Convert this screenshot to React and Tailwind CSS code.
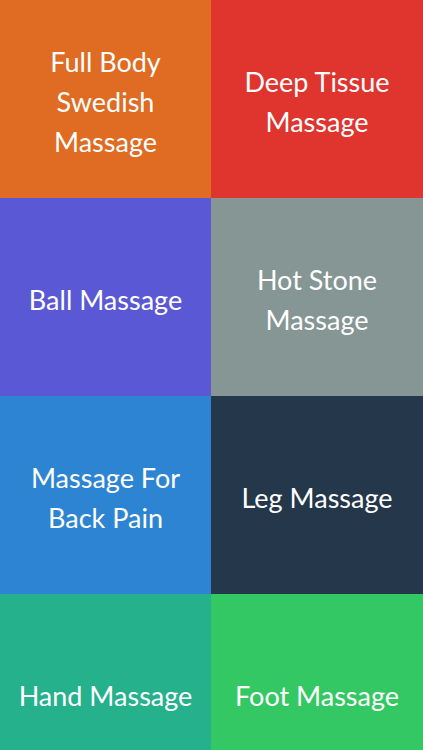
import React from "react";

const tiles = [
  { lines: ["Full Body", "Swedish", "Massage"], bg: "bg-[#e06b22]" },
  { lines: ["Deep Tissue", "Massage"], bg: "bg-[#e0342f]" },
  { lines: ["Ball Massage"], bg: "bg-[#5b58d6]" },
  { lines: ["Hot Stone", "Massage"], bg: "bg-[#869694]" },
  { lines: ["Massage For", "Back Pain"], bg: "bg-[#2d84d3]" },
  { lines: ["Leg Massage"], bg: "bg-[#25374a]" },
  { lines: ["Hand Massage"], bg: "bg-[#26b18d]" },
  { lines: ["Foot Massage"], bg: "bg-[#33c863]" },
];

export default function App() {
  return (
    <div
      className="w-[423px] h-[750px] overflow-hidden bg-white"
      style={{ fontFamily: "Lato, 'Open Sans', sans-serif" }}
    >
      <div className="grid grid-cols-[211px_212px] auto-rows-[198px]">
        {tiles.map((t, i) => (
          <div
            key={i}
            className={`${t.bg} flex flex-col items-center justify-center pt-[5px] text-white text-[27px] leading-[40px] text-center`}
          >
            {t.lines.map((l, j) => (
              <div key={j}>{l}</div>
            ))}
          </div>
        ))}
      </div>
    </div>
  );
}
